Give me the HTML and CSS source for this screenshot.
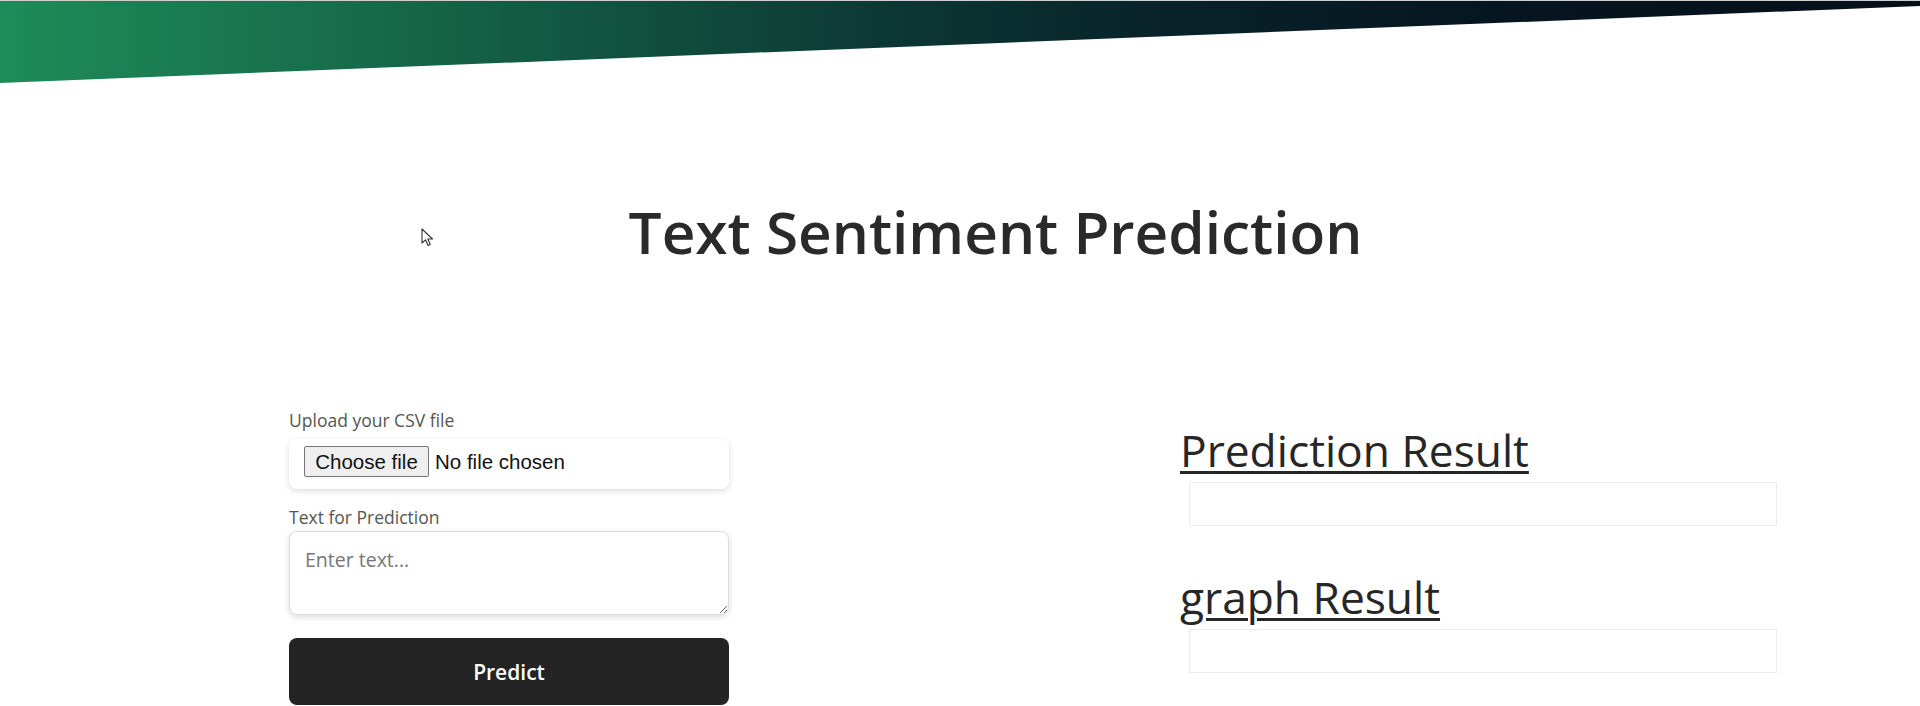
FILE: index.html
```html
<!DOCTYPE html>
<html lang="en">
<head>
<meta charset="utf-8">
<title>Text Sentiment Prediction</title>
<link rel="stylesheet" href="styles.css">
</head>
<body>
<div class="banner"></div>
<h1 class="title">Text Sentiment Prediction</h1>
<main class="content">
  <form class="form-col">
    <span class="field-label">Upload your CSV file</span>
    <div class="file-box">
      <label class="file-picker">
        <input class="file-input" type="file" accept=".csv">
        <span class="file-btn">Choose file</span>
        <span class="file-name">No file chosen</span>
      </label>
    </div>
    <label class="field-label" for="txt">Text for Prediction</label>
    <textarea id="txt" class="text-input" placeholder="Enter text..."></textarea>
    <button class="predict-btn" type="button">Predict</button>
  </form>
  <section class="result-col">
    <h2 class="result-title">Prediction Result</h2>
    <div class="result-box"></div>
    <h2 class="result-title second">graph Result</h2>
    <div class="result-box"></div>
  </section>
</main>
<svg class="cursor" width="14" height="20" viewBox="0 0 14 20"><path d="M1 1 L1 15 L4.5 11.8 L7 17.5 L9.2 16.5 L6.8 11 L11.5 11 Z" fill="#fff" stroke="#333" stroke-width="1.1" stroke-linejoin="round"/></svg>
</body>
</html>
```

FILE: styles.css
```css
html, body {
  margin: 0;
  padding: 0;
  background: #fff;
  height: 706px;
  overflow: hidden;
}
body {
  font-family: "Open Sans", "Noto Sans", sans-serif;
  color: #222;
  position: relative;
}
.banner {
  height: 82px;
  border-top: 1px solid #cfcfcf;
  background: linear-gradient(90deg, #1e8c58 0%, #176c4c 18%, #11523f 32%, #0c3834 46%, #08232a 60%, #061721 75%, #050f18 100%);
  clip-path: polygon(0 0, 100% 0, 100% 6px, 0 100%);
}
.title {
  margin: 113px 0 0;
  padding-left: 71px;
  text-align: center;
  font-size: 58.5px;
  font-weight: 600;
  line-height: 70px;
  color: #2a2a2a;
}
.content {
  display: grid;
  grid-template-columns: 440px 597px;
  column-gap: 451px;
  padding-left: 289px;
  margin-top: 142px;
}
.form-col {
  display: flex;
  flex-direction: column;
}
.field-label {
  font-size: 17.5px;
  line-height: 24px;
  color: #555;
}
.file-box {
  margin-top: 7px;
  margin-bottom: 16px;
  height: 50px;
  padding: 7px 15px 0;
  box-sizing: border-box;
  border-radius: 8px;
  background: #fff;
  box-shadow: 0 2px 6px rgba(0, 0, 0, 0.14);
}
.file-picker {
  display: flex;
  align-items: center;
  gap: 6px;
  font-family: "Liberation Sans", Arial, sans-serif;
  font-size: 20.5px;
  color: #111;
  cursor: pointer;
}
.file-input {
  position: absolute;
  width: 1px;
  height: 1px;
  opacity: 0;
}
.file-btn {
  display: flex;
  align-items: center;
  justify-content: center;
  width: 125px;
  height: 31px;
  box-sizing: border-box;
  border: 1px solid #767676;
  border-radius: 2px;
  background: #efefef;
  color: #111;
}
.text-input {
  margin-top: 2px;
  height: 84px;
  box-sizing: border-box;
  padding: 14px 15px;
  border: 1px solid #ddd;
  border-radius: 8px;
  box-shadow: 0 2px 6px rgba(0, 0, 0, 0.14);
  font-family: "Open Sans", sans-serif;
  font-size: 19.5px;
  resize: vertical;
  outline: none;
}
.text-input::placeholder {
  color: #767676;
}
.predict-btn {
  margin-top: 23px;
  height: 67px;
  border: none;
  border-radius: 8px;
  background: #242424;
  color: #fff;
  font-family: "Open Sans", sans-serif;
  font-weight: 600;
  font-size: 21px;
}
.result-col {
  padding-top: 12px;
}
.result-title {
  margin: 0;
  font-family: "Open Sans", sans-serif;
  font-size: 44.3px;
  font-weight: 400;
  line-height: 60px;
  color: #262626;
  text-decoration: underline;
  text-decoration-thickness: 2.5px;
  text-underline-offset: 4px;
}
.result-title.second {
  margin-top: 41px;
}
.result-box {
  margin: 2px 0 0 9px;
  height: 44px;
  border: 1px solid #ececec;
  box-sizing: border-box;
}
.cursor {
  position: absolute;
  left: 421px;
  top: 228px;
}
```
